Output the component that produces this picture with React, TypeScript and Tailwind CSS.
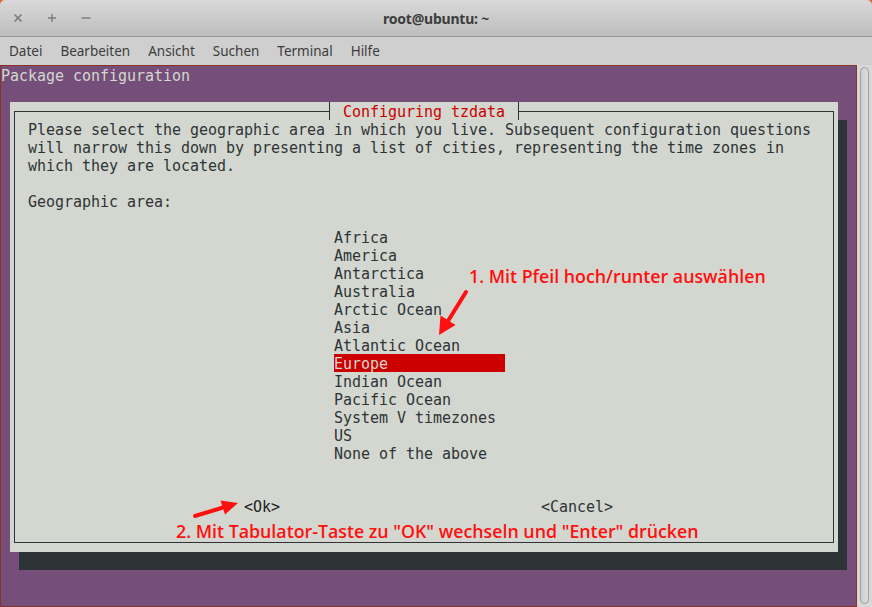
const menu = ["Datei", "Bearbeiten", "Ansicht", "Suchen", "Terminal", "Hilfe"];

const areas = [
  "Africa",
  "America",
  "Antarctica",
  "Australia",
  "Arctic Ocean",
  "Asia",
  "Atlantic Ocean",
  "Europe",
  "Indian Ocean",
  "Pacific Ocean",
  "System V timezones",
  "US",
  "None of the above",
];

function Tick({ side }: { side: "left" | "right" }) {
  // box drawing ┤ / ├
  return (
    <svg width="9" height="18" viewBox="0 0 9 18" className="block">
      <line x1="4.5" y1="0" x2="4.5" y2="18" stroke="#2e3436" strokeWidth="1" />
      {side === "left" ? (
        <line x1="0" y1="9.5" x2="4.5" y2="9.5" stroke="#2e3436" strokeWidth="1" />
      ) : (
        <line x1="4.5" y1="9.5" x2="9" y2="9.5" stroke="#2e3436" strokeWidth="1" />
      )}
    </svg>
  );
}

export default function App() {
  return (
    <div className="relative w-[872px] h-[607px] overflow-hidden bg-[#e2662f] flex flex-col font-['Noto_Sans',sans-serif]">
      {/* title bar */}
      <div className="h-[37px] shrink-0 rounded-t-[5px] bg-gradient-to-b from-[#d9d9d9] to-[#bdbdbd] border-b border-[#9a9a9a] grid grid-cols-[1fr_auto_1fr] items-center">
        <div className="flex pl-[1px] text-[#7b7b7b]">
          <div className="w-[34px] flex justify-center">
            <svg width="10" height="10" viewBox="0 0 10 10">
              <path d="M1.5 1.5 L8.5 8.5 M8.5 1.5 L1.5 8.5" stroke="currentColor" strokeWidth="1.6" />
            </svg>
          </div>
          <div className="w-[34px] flex justify-center">
            <svg width="10" height="10" viewBox="0 0 10 10">
              <path d="M5 1 V9 M1 5 H9" stroke="currentColor" strokeWidth="1.4" />
            </svg>
          </div>
          <div className="w-[34px] flex justify-center">
            <svg width="10" height="10" viewBox="0 0 10 10">
              <path d="M0.5 5 H9.5" stroke="currentColor" strokeWidth="1.4" />
            </svg>
          </div>
        </div>
        <div className="text-[14px] font-bold text-[#3c3c3c] tracking-[-0.2px]">root@ubuntu: ~</div>
        <div />
      </div>

      {/* menu bar */}
      <div className="h-[28px] shrink-0 bg-[#cfcfcf] flex items-center pl-[9px] gap-[18px] text-[13.5px] text-[#3c3c3c]">
        {menu.map((m) => (
          <span key={m}>{m}</span>
        ))}
      </div>

      {/* terminal */}
      <div className="flex-1 flex min-h-0">
        <div className="w-[857px] border border-[#8a3324] bg-[#754f7a] font-['DejaVu_Sans_Mono',monospace] text-[15px] leading-[18px] tracking-[-0.03px] whitespace-pre">
          <div className="h-[18px] pt-[1px] text-[#d3d7cf]">Package configuration</div>
          <div className="h-[18px]" />
          <div className="ml-[9px] w-[828px] h-[450px] bg-[#d3d7cf] shadow-[9px_18px_0_#2e3436] px-[4px] py-[9px] flex">
            <div className="relative flex-1 border border-[#2e3436] text-[#2e3436] pt-[9px] pl-[13px]">
              <div className="absolute left-[310px] top-[-10px] h-[18px] flex bg-[#d3d7cf]">
                <Tick side="left" />
                <span className="pt-[1px] text-[#cc0000]"> Configuring tzdata </span>
                <Tick side="right" />
              </div>
              <div>Please select the geographic area in which you live. Subsequent configuration questions</div>
              <div>will narrow this down by presenting a list of cities, representing the time zones in</div>
              <div>which they are located.</div>
              <div className="h-[18px]" />
              <div>Geographic area:</div>
              <div className="h-[18px]" />
              <div className="ml-[306px] flex flex-col">
                {areas.map((a) => (
                  <div
                    key={a}
                    className={
                      a === "Europe"
                        ? "w-[171px] h-[17px] -mt-[1px] mb-[1px] pt-[1px] box-content bg-[#cc0000] text-[#d3d7cf]"
                        : "h-[18px]"
                    }
                  >
                    {a}
                  </div>
                ))}
              </div>
              <div className="h-[35px]" />
              <div className="flex pl-[216px] text-[#1e2224]">
                <span className="w-[297px]">&lt;Ok&gt;</span>
                <span className="text-[#2e3436]">&lt;Cancel&gt;</span>
              </div>
            </div>
          </div>
        </div>
        <div className="w-[15px] bg-[#d8d8d8] pt-[2px] pb-[3px] pl-[3px]">
          <div className="w-[9px] h-full rounded-full border border-[#9e9e9e] bg-gradient-to-r from-[#cdcdcd] to-[#dedede]" />
        </div>
      </div>

      {/* annotations drawn over the screenshot */}
      <div className="absolute left-[469px] top-[263px] text-[17.8px] leading-[26px] font-semibold text-[#ff1010] font-['Open_Sans',sans-serif] whitespace-nowrap">
        1. Mit Pfeil hoch/runter auswählen
      </div>
      <div className="absolute left-[176px] top-[518px] text-[17.8px] leading-[26px] font-semibold text-[#ff1010] font-['Open_Sans',sans-serif] whitespace-nowrap">
        2. Mit Tabulator-Taste zu "OK" wechseln und "Enter" drücken
      </div>
      <svg className="absolute inset-0 pointer-events-none" width="872" height="607" viewBox="0 0 872 607">
        <line x1="466" y1="292" x2="448" y2="321" stroke="#ff1010" strokeWidth="4" strokeLinecap="round" />
        <polygon points="439,335 455.5,325 440.5,315.5" fill="#ff1010" />
        <line x1="195" y1="516" x2="223" y2="507.5" stroke="#ff1010" strokeWidth="4" strokeLinecap="round" />
        <polygon points="238,503 225,514.5 220.5,500.5" fill="#ff1010" />
      </svg>
    </div>
  );
}
